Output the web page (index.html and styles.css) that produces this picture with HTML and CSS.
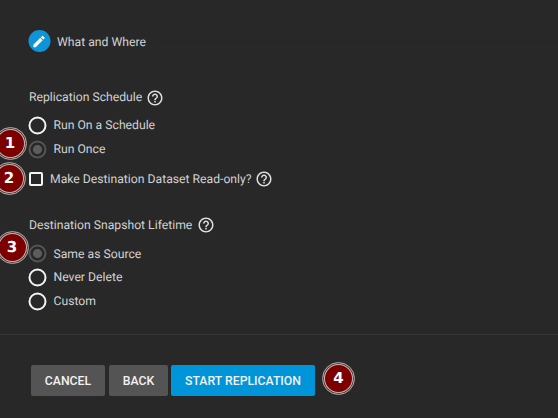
FILE: index.html
```html
<!DOCTYPE html>
<html lang="en">
<head>
<meta charset="utf-8">
<title>Replication Task Wizard</title>
<link rel="stylesheet" href="styles.css">
</head>
<body>
<svg class="defs" width="0" height="0">
  <symbol id="help" viewBox="0 0 24 24"><path d="M11 18h2v-2h-2v2zm1-16C6.480 2 2 6.480 2 12s4.480 10 10 10 10-4.480 10-10S17.520 2 12 2zm0 18c-4.410 0-8-3.590-8-8s3.590-8 8-8 8 3.590 8 8-3.590 8-8 8zm0-14c-2.210 0-4 1.790-4 4h2c0-1.100.9-2 2-2s2 .9 2 2c0 2-3 1.750-3 5h2c0-2.250 3-2.500 3-5 0-2.210-1.790-4-4-4z"/></symbol>
</svg>
<main class="wizard">
  <header class="step">
    <span class="step-icon"><svg viewBox="0 0 24 24"><path d="M3 17.250V21h3.750L17.810 9.940l-3.750-3.750L3 17.250zM20.710 7.040a1 1 0 0 0 0-1.410l-2.340-2.340a1 1 0 0 0-1.410 0l-1.830 1.830 3.750 3.750 1.830-1.830z"/></svg></span>
    <span class="step-title">What and Where</span>
    <span class="step-line"></span>
  </header>

  <section class="group">
    <div class="heading"><span>Replication Schedule</span><svg class="help"><use href="#help"/></svg></div>
    <div class="option"><span class="radio"></span><span>Run On a Schedule</span></div>
    <div class="option"><span class="radio selected"></span><span>Run Once</span><b class="badge badge-1">1</b></div>
  </section>

  <div class="check-row"><span class="checkbox"></span><span>Make Destination Dataset Read-only?</span><svg class="help"><use href="#help"/></svg><b class="badge badge-2">2</b></div>

  <section class="group lifetime">
    <div class="heading"><span>Destination Snapshot Lifetime</span><svg class="help"><use href="#help"/></svg></div>
    <div class="option first"><span class="radio selected"></span><span>Same as Source</span><b class="badge badge-3">3</b></div>
    <div class="option"><span class="radio"></span><span>Never Delete</span></div>
    <div class="option"><span class="radio"></span><span>Custom</span></div>
  </section>

  <footer class="actions">
    <button class="btn cancel">CANCEL</button>
    <button class="btn back">BACK</button>
    <button class="btn start">START REPLICATION</button>
    <b class="badge badge-4">4</b>
  </footer>
</main>
</body>
</html>
```
FILE: styles.css
```css
* { box-sizing: border-box; }
body {
  margin: 0;
  height: 418px;
  overflow: hidden;
  background: #282828;
  color: #d2d2d2;
  font: 12.200px/18px Roboto, sans-serif;
  text-rendering: geometricPrecision;
}
.defs { position: absolute; }
.wizard { height: 418px; display: flex; flex-direction: column; }
.step { display: flex; align-items: center; height: 22px; margin: 30px 0 0 28.500px; }
.step-icon { width: 22px; height: 22px; border-radius: 50%; background: #0e95d8; display: flex; align-items: center; justify-content: center; transform: translateX(-0.500px); }
.step-icon svg { width: 15px; height: 15px; fill: #fff; }
.step-title { margin: 1px 0 0 6.500px; white-space: nowrap; }
.step-line { flex: 1; height: 1px; margin-left: 8px; background: #252525; }
.group { display: flex; flex-direction: column; padding-left: 29px; margin-top: 33px; }
.heading { display: flex; align-items: center; height: 24px; margin-bottom: 4px; white-space: nowrap; }
.help { width: 18px; height: 18px; margin: 1px 0 0 4px; fill: #dedede; flex: none; }
.option, .check-row { position: relative; display: flex; align-items: center; height: 24px; white-space: nowrap; }
.radio { width: 18px; height: 18px; border: 2px solid #f4f4f4; border-radius: 50%; margin-right: 6.500px; flex: none; transform: translate(-0.500px, 0.500px); }
.radio.selected { border-color: #555; background: radial-gradient(circle, #5d5d5d 4px, transparent 5px); }
.check-row { height: 24px; margin: 6px 0 0 29px; }
.check-row .help { margin: -1px 0 0 3.500px; }
.checkbox { width: 14px; height: 14px; border: 2px solid #f4f4f4; border-radius: 2px; margin-right: 7px; }
.lifetime { margin-top: 22px; }
.lifetime .heading { margin-bottom: 5px; }
.lifetime .heading .help { margin: 0 0 0 4.500px; }
.lifetime .first { margin-bottom: -1px; }
.lifetime .first .radio { transform: translate(-0.500px, -0.500px); }
.actions { position: relative; display: flex; align-items: flex-start; gap: 4px; margin-top: 21px; padding: 30px 0 0 31px; border-top: 1px solid #353535; }
.btn { height: 31px; padding: 0; border: 0; border-radius: 2px; background: #545454; color: #f2f2f2; font: 500 12.250px/32px Roboto, sans-serif; white-space: nowrap; }
.cancel { width: 74px; }
.back { width: 59px; margin-right: -1px; }
.start { width: 144px; background: #0095d9; }
.badge {
  position: absolute; width: 33px; height: 33px; border-radius: 50%;
  border: 1px solid #aaa; background: #7d0000; color: #fff;
  box-shadow: inset 0 0 0 1px #4b3535, inset 0 0 0 2px #c5b5b5;
  font: bold 15px/31px "DejaVu Sans", sans-serif; text-align: center;
}
.badge-1 { left: -35.500px; top: -10.500px; }
.badge-2 { left: -36.500px; top: -5px; }
.badge-3 { left: -33.500px; top: -11px; }
.badge-4 { left: 322px; top: 26.500px; }
```
